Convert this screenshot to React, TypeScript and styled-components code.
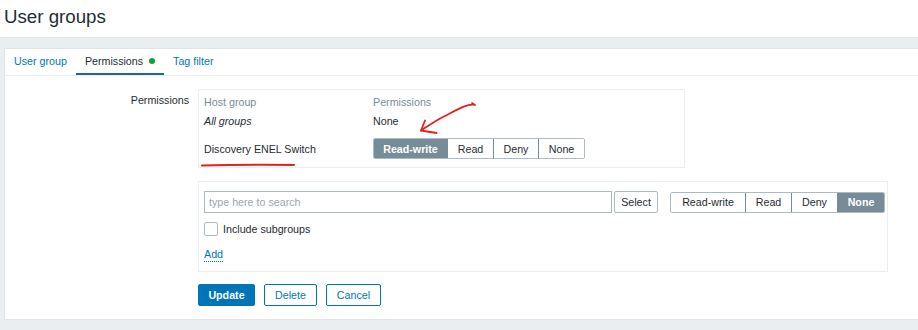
import React from "react";
import styled, { createGlobalStyle } from "styled-components";

const GlobalStyle = createGlobalStyle`
  html, body { margin: 0; padding: 0; }
  body {
    background: #ebeef0;
    font-family: "Liberation Sans", Arial, sans-serif;
    font-size: 10.7px;
    color: #1f2c33;
  }
  * { box-sizing: border-box; }
`;

const Page = styled.div`
  position: relative;
  width: 918px;
  height: 330px;
  overflow: hidden;
`;

const Header = styled.header`
  height: 37px;
  background: #fff;
  padding: 6px 0 0 4px;
`;

const Title = styled.h1`
  margin: 0;
  font-size: 18.7px;
  font-weight: normal;
  line-height: 21.5px;
  color: #1f2c33;
`;

const Main = styled.main`
  border-top: 1px solid #e2e6e9;
  padding: 10px 0 0 4px;
`;

const Panel = styled.section`
  background: #fff;
  border: 1px solid #dfe4e7;
  border-right: none;
  padding-bottom: 13px;
`;

const TabList = styled.nav`
  display: flex;
  height: 27px;
  border-bottom: 1px solid #ebeef0;
`;

const Tab = styled.div<{ $active?: boolean }>`
  display: flex;
  align-items: center;
  gap: 6px;
  padding: 0 9px;
  height: 26px;
  border-bottom: 2px solid ${(p) => (p.$active ? "#1f65a6" : "transparent")};
  color: ${(p) => (p.$active ? "#1f2c33" : "#0275b8")};
`;

const Dot = styled.span`
  width: 6px;
  height: 6px;
  border-radius: 50%;
  background: #13a13b;
`;

const FormGrid = styled.div`
  display: grid;
  grid-template-columns: 184px 1fr;
  column-gap: 9px;
  row-gap: 13px;
  padding-top: 13px;
`;

const Label = styled.div`
  text-align: right;
  padding-top: 4px;
  line-height: 14px;
`;

const Box = styled.div<{ $w: number }>`
  width: ${(p) => p.$w}px;
  border: 1px solid #ebeef0;
`;

const PermTable = styled(Box)`
  display: grid;
  grid-template-columns: 169px 1fr;
  padding: 3px 5px 8px;
  align-items: center;
`;

const Cell = styled.div<{ $h: number; $muted?: boolean; $italic?: boolean; $pt?: number }>`
  height: ${(p) => p.$h}px;
  margin-top: ${(p) => p.$pt ?? 0}px;
  display: flex;
  align-items: center;
  color: ${(p) => (p.$muted ? "#768d99" : "#1f2c33")};
  font-style: ${(p) => (p.$italic ? "italic" : "normal")};
`;

const RadioGroup = styled.div`
  display: flex;
  flex-shrink: 0;
  height: 21px;
  border: 1px solid #acbbc2;
  border-radius: 2px;
  overflow: hidden;
`;

const RadioItem = styled.div<{ $w: number; $on?: boolean }>`
  width: ${(p) => p.$w}px;
  flex-shrink: 0;
  display: flex;
  align-items: center;
  justify-content: center;
  background: ${(p) => (p.$on ? "#768d99" : "#fff")};
  color: ${(p) => (p.$on ? "#fff" : "#1f2c33")};
  font-weight: ${(p) => (p.$on ? "bold" : "normal")};
  & + & { border-left: 1px solid ${(p) => (p.$on ? "#768d99" : "#acbbc2")}; }
`;

const AddBox = styled(Box)`
  padding: 9px 2px 9px 5px;
`;

const SearchRow = styled.div`
  display: flex;
  align-items: center;
`;

const Input = styled.div`
  width: 408px;
  flex-shrink: 0;
  height: 22px;
  border: 1px solid #acbbc2;
  padding-left: 4px;
  display: flex;
  align-items: center;
  color: #9aa8b0;
`;

const PlainButton = styled.div`
  margin-left: 2px;
  width: 44px;
  flex-shrink: 0;
  height: 22px;
  border: 1px solid #acbbc2;
  border-radius: 2px;
  display: flex;
  align-items: center;
  justify-content: center;
`;

const GroupSlot = styled.div`
  margin-left: 12px;
  flex-shrink: 0;
`;

const CheckRow = styled.label`
  display: flex;
  align-items: center;
  gap: 5px;
  margin-top: 8px;
  height: 15px;
`;

const CheckBox = styled.span`
  width: 14px;
  height: 14px;
  border: 1px solid #acbbc2;
  border-radius: 2px;
  background: #fff;
`;

const AddLink = styled.span`
  display: inline-block;
  margin-top: 12px;
  color: #0275b8;
  line-height: 13px;
  border-bottom: 1px dotted #0275b8;
`;

const Actions = styled.div`
  display: flex;
  gap: 9px;
  margin-top: -1px;
`;

const ActionButton = styled.div<{ $primary?: boolean; $w: number }>`
  width: ${(p) => p.$w}px;
  height: 22px;
  border-radius: 2px;
  border: 1px solid #0275b8;
  background: ${(p) => (p.$primary ? "#0275b8" : "#fff")};
  color: ${(p) => (p.$primary ? "#fff" : "#0275b8")};
  font-weight: ${(p) => (p.$primary ? "bold" : "normal")};
  display: flex;
  align-items: center;
  justify-content: center;
`;

const Annotation = styled.svg`
  position: absolute;
  left: 0;
  top: 0;
  pointer-events: none;
`;

const labels = ["Read-write", "Read", "Deny", "None"];

const PermRadio: React.FC<{ selected: string; widths: number[] }> = ({ selected, widths }) => (
  <RadioGroup>
    {labels.map((l, i) => (
      <RadioItem key={l} $w={widths[i]} $on={l === selected}>
        {l}
      </RadioItem>
    ))}
  </RadioGroup>
);

export default function App() {
  return (
    <Page>
      <GlobalStyle />
      <Header>
        <Title>User groups</Title>
      </Header>
      <Main>
        <Panel>
          <TabList>
            <Tab>User group</Tab>
            <Tab $active>
              Permissions <Dot />
            </Tab>
            <Tab>Tag filter</Tab>
          </TabList>
          <FormGrid>
            <Label>Permissions</Label>
            <div>
              <PermTable $w={487}>
                <Cell $h={18} $muted>Host group</Cell>
                <Cell $h={18} $muted>Permissions</Cell>
                <Cell $h={20} $italic>All groups</Cell>
                <Cell $h={20}>None</Cell>
                <Cell $h={21} $pt={7}>Discovery ENEL Switch</Cell>
                <Cell $h={21} $pt={7}>
                  <PermRadio selected="Read-write" widths={[73, 46, 45, 46]} />
                </Cell>
              </PermTable>
            </div>
            <div />
            <div>
              <AddBox $w={690}>
                <SearchRow>
                  <Input>type here to search</Input>
                  <PlainButton>Select</PlainButton>
                  <GroupSlot>
                    <PermRadio selected="None" widths={[74, 46, 46, 47]} />
                  </GroupSlot>
                </SearchRow>
                <CheckRow>
                  <CheckBox />
                  Include subgroups
                </CheckRow>
                <AddLink>Add</AddLink>
              </AddBox>
            </div>
            <div />
            <Actions>
              <ActionButton $primary $w={57}>Update</ActionButton>
              <ActionButton $w={53}>Delete</ActionButton>
              <ActionButton $w={55}>Cancel</ActionButton>
            </Actions>
          </FormGrid>
        </Panel>
      </Main>
      <Annotation width="918" height="330" viewBox="0 0 918 330">
        <path
          d="M202 165.5 Q248 164.5 294 165"
          stroke="#e3211d"
          strokeWidth="2"
          fill="none"
          strokeLinecap="round"
        />
        <path
          d="M472 103 L475 105 C467 103 455 111 443 117 C435 121 428 126 421 130.5"
          stroke="#e3211d"
          strokeWidth="1.8"
          fill="none"
          strokeLinecap="round"
          strokeLinejoin="round"
        />
        <path
          d="M425 120.5 L421 130.5 L436.5 133"
          stroke="#e3211d"
          strokeWidth="1.8"
          fill="none"
          strokeLinecap="round"
          strokeLinejoin="round"
        />
      </Annotation>
    </Page>
  );
}
